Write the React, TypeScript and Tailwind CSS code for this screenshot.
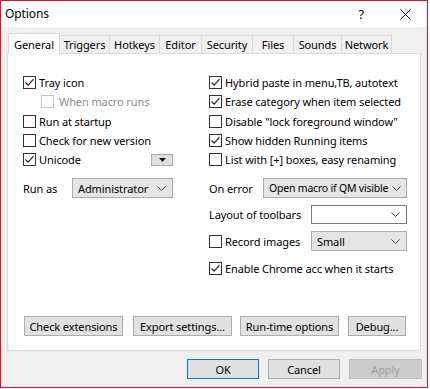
import React from 'react';

const tabs: [string, string][] = [
  ["General", "w-[52px]"],
  ["Triggers", "w-[51px]"],
  ["Hotkeys", "w-[51px]"],
  ["Editor", "w-[43px]"],
  ["Security", "w-[52px]"],
  ["Files", "w-[42px]"],
  ["Sounds", "w-[49px]"],
  ["Network", "w-[51px]"],
];

const Check = () => (
  <svg width="11" height="11" viewBox="0 0 11 11" fill="none" stroke="#222" strokeWidth={1.2}>
    <path d="M1.5 5.5 L4.2 8.2 L9.5 2.2" />
  </svg>
);

const Chevron = () => (
  <svg className="shrink-0" width="9" height="5" viewBox="0 0 9 5" fill="none" stroke="#444" strokeWidth={1}>
    <path d="M0.5 0.5 L4.5 4.5 L8.5 0.5" />
  </svg>
);

const CheckRow = ({ label, checked, disabled, indent }: { label: string; checked?: boolean; disabled?: boolean; indent?: boolean }) => (
  <div className={`flex items-center h-[19.25px] whitespace-nowrap ${indent ? 'pl-[18px]' : ''}`}>
    <div className={`w-[13px] h-[13px] border bg-white flex items-center justify-center shrink-0 ${disabled ? 'border-[#c4c4c4]' : 'border-[#333]'}`}>
      {checked && <Check />}
    </div>
    <span className={`leading-none ${disabled ? 'text-[#8c8c8c] ml-[5px]' : 'ml-[3px]'}`}>{label}</span>
  </div>
);

const Combo = ({ value, className, textClass, white }: { value: string; className: string; textClass?: string; white?: boolean }) => (
  <div className={`flex items-center justify-between gap-1 whitespace-nowrap border pl-[5px] pr-[6px] ${white ? 'bg-white border-[#7a7a7a]' : 'bg-[#e5e5e5] border-[#acacac]'} ${className}`}>
    <span className={`leading-none ${textClass ?? ''}`}>{value}</span>
    <Chevron />
  </div>
);

const Btn = ({ label, className }: { label: string; className: string }) => (
  <div className={`flex items-center justify-center whitespace-nowrap bg-[#e1e1e1] border border-[#adadad] h-[20px] leading-none ${className}`}>{label}</div>
);

export default function App() {
  return (
    <div className="w-[430px] h-[389px] bg-white text-[11px] tracking-[-0.1px] text-black" style={{ fontFamily: '"Noto Sans", "Open Sans", sans-serif' }}>
      <div className="w-[428px] h-[388px] border border-[#e81123] bg-[#f0f0f0] flex flex-col">
        <div className="h-[26px] bg-white flex items-center pl-[4px] shrink-0">
          <span className="text-[12px] leading-none">Options</span>
          <span className="ml-auto text-[13px] leading-none">?</span>
          <svg className="ml-[36px] mr-[16px]" width="11" height="11" viewBox="0 0 11 11" stroke="#111" strokeWidth={1}>
            <path d="M0.5 0.5 L10.5 10.5 M10.5 0.5 L0.5 10.5" />
          </svg>
        </div>
        <div className="flex items-end h-[26px] pl-[7px] shrink-0">
          {tabs.map(([t, w], i) =>
            i === 0 ? (
              <div key={t} className={`${w} h-[21px] bg-white border border-[#d9d9d9] border-b-0 flex items-center justify-center relative z-10 -mb-px`}>
                <span className="leading-none">{t}</span>
              </div>
            ) : (
              <div key={t} className={`${w} h-[18px] bg-[#f0f0f0] border border-[#d9d9d9] border-b-0 -ml-px flex items-center justify-center`}>
                <span className="leading-none">{t}</span>
              </div>
            )
          )}
        </div>
        <div className="ml-[6px] w-[414px] h-[298px] bg-white border border-[#d9d9d9] flex flex-col shrink-0">
          <div className="flex pt-[19px]">
            <div className="w-[201px] pl-[15px] flex flex-col">
              <CheckRow label="Tray icon" checked />
              <CheckRow label="When macro runs" disabled indent />
              <CheckRow label="Run at startup" />
              <CheckRow label="Check for new version" />
              <div className="flex items-center">
                <CheckRow label="Unicode" checked />
                <div className="ml-auto mr-[36px] w-[22px] h-[12px] bg-[#e1e1e1] border border-[#adadad] flex items-center justify-center">
                  <svg width="7" height="4" viewBox="0 0 7 4"><path d="M0 0 L7 0 L3.5 4 Z" fill="#111" /></svg>
                </div>
              </div>
              <div className="flex items-center mt-[9px]">
                <span className="w-[49px] leading-none">Run as</span>
                <Combo value="Administrator" className="w-[101px] h-[20px]" />
              </div>
            </div>
            <div className="w-[200px] flex flex-col">
              <CheckRow label="Hybrid paste in menu,TB, autotext" checked />
              <CheckRow label="Erase category when item selected" checked />
              <CheckRow label={'Disable "lock foreground window"'} />
              <CheckRow label="Show hidden Running items" checked />
              <CheckRow label="List with [+] boxes, easy renaming" />
              <div className="flex items-center mt-[9px]">
                <span className="w-[54px] leading-none">On error</span>
                <Combo value="Open macro if QM visible" textClass="text-[10.5px] tracking-[-0.2px]" className="w-[144px] h-[20px]" />
              </div>
              <div className="flex items-center mt-[7px]">
                <span className="w-[102px] leading-none whitespace-nowrap">Layout of toolbars</span>
                <Combo value="" white className="w-[96px] h-[19px]" />
              </div>
              <div className="flex items-center mt-[7px]">
                <div className="w-[102px]"><CheckRow label="Record images" /></div>
                <Combo value="Small" className="w-[96px] h-[20px]" />
              </div>
              <div className="mt-[8px]">
                <CheckRow label="Enable Chrome acc when it starts" checked />
              </div>
            </div>
          </div>
          <div className="flex mt-auto mb-[14px] pl-[16px]">
            <Btn label="Check extensions" className="w-[99px]" />
            <Btn label="Export settings..." className="w-[99px] ml-[10px]" />
            <Btn label="Run-time options" className="w-[99px] ml-[8px]" />
            <Btn label="Debug..." className="w-[58px] ml-[9px]" />
          </div>
        </div>
        <div className="flex mt-[8px] pl-[186px]">
          <div className="w-[72px] h-[20px] bg-[#e1e1e1] border border-[#0078d7] flex items-center justify-center leading-none">OK</div>
          <Btn label="Cancel" className="w-[72px] ml-[9px]" />
          <div className="w-[73px] h-[20px] ml-[9px] bg-[#cccccc] border border-[#bfbfbf] text-[#a0a0a0] flex items-center justify-center leading-none">Apply</div>
        </div>
      </div>
    </div>
  );
}
